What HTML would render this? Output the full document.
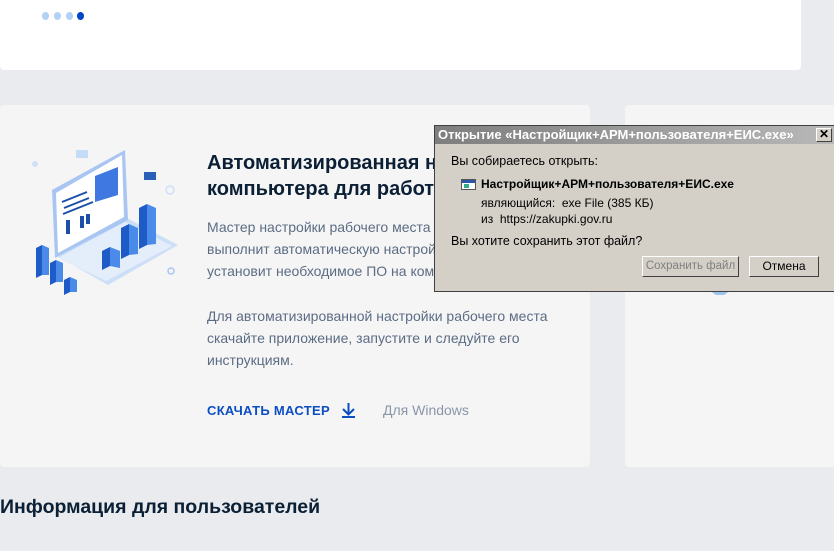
<!DOCTYPE html>
<html><head><meta charset="utf-8"><style>
*{margin:0;padding:0;box-sizing:border-box}
body{width:834px;height:551px;overflow:hidden;background:#e9ebee;font-family:"Liberation Sans","DejaVu Sans",sans-serif;position:relative}
.top{position:absolute;left:0;top:-10px;width:801px;height:80px;background:#fff;border-radius:0 0 4px 4px}
.dot{position:absolute;top:12px;width:7px;height:8px;border-radius:50%;background:#b3d0f5}
.card{position:absolute;top:105px;height:362px;background:#f5f5f6;border-radius:4px}
.h{position:absolute;left:207px;top:150px;font-size:20px;font-weight:bold;color:#0b1f35;line-height:26px;white-space:nowrap}
.p{position:absolute;left:207px;font-size:14px;color:#5c6c83;line-height:22px;white-space:nowrap}
.dl{position:absolute;left:434px;top:125px;width:400px;height:167px;background:#d4d0c8;border:1px solid #404040;border-right:none;font-family:"Liberation Sans",sans-serif;font-size:12.5px;color:#000}
.tb{height:18px;background:linear-gradient(90deg,#7e7e7e,#b8b8b8);color:#fff;font-weight:bold;font-size:13px;line-height:18px;padding-left:3px;position:relative;white-space:nowrap;overflow:hidden}
.x{position:absolute;right:2px;top:2px;width:16px;height:14px;background:#d4d0c8;border:1px solid;border-color:#fff #404040 #404040 #fff;color:#000;font-size:12px;line-height:11px;text-align:center}
.t{position:absolute;white-space:nowrap}
.btn{position:absolute;top:130px;height:21px;border:1px solid;border-color:#fff #404040 #404040 #fff;background:#d4d0c8;text-align:center;line-height:19px;font-size:12px;white-space:nowrap}
</style></head><body>
<div class="top">
<div class="dot" style="left:42px;top:22px"></div><div class="dot" style="left:54px;top:22px"></div><div class="dot" style="left:66px;top:22px"></div><div class="dot" style="left:77px;top:22px;background:#0047c8"></div>
</div>
<div class="card" style="left:0;width:590px"></div>
<div class="card" style="left:625px;width:220px"></div>
<svg style="position:absolute;left:0;top:120px" width="200" height="180" viewBox="0 0 200 180">
<polygon points="55,135 125,97 178,125 108,165" fill="#cddff7"/>
<polygon points="58,138 125,102 172,126 106,161" fill="#e4eefb"/>
<polygon points="52,70 125,30 128,100 55,138" fill="#a9c6f2"/>
<polygon points="56,73 122,35 124,97 58,133" fill="#fff"/>
<polygon points="95,56 118,47 118,75 95,82" fill="#3f78e0"/>
<path d="M62 82l25-10M64 88l25-10M63 94l30-12" stroke="#1c4fa8" stroke-width="2"/>
<rect x="66" y="100" width="4" height="14" fill="#1c4fa8"/><rect x="80" y="96" width="4" height="12" fill="#1c4fa8"/><rect x="86" y="94" width="4" height="10" fill="#1c4fa8"/>
<polygon points="102,131 110,127 110,146 102,150" fill="#1e5bc6"/><polygon points="110,127 120,131 120,148 110,146" fill="#4a8ae8"/>
<polygon points="121,108 129,104 129,135 121,139" fill="#1e5bc6"/><polygon points="129,104 138,108 138,134 129,135" fill="#4a8ae8"/>
<polygon points="139,88 147,84 147,125 139,129" fill="#1e5bc6"/><polygon points="147,84 156,88 156,124 147,125" fill="#4a8ae8"/>
<polygon points="36,128 42,125 42,155 36,158" fill="#1e5bc6"/><polygon points="42,125 49,128 49,155 42,155" fill="#4a8ae8"/>
<polygon points="50,143 56,140 56,162 50,165" fill="#1e5bc6"/><polygon points="56,140 63,143 63,162 56,162" fill="#4a8ae8"/>
<polygon points="64,160 70,157 70,172 64,175" fill="#1e5bc6"/><polygon points="70,157 77,160 77,172 70,172" fill="#4a8ae8"/>
<rect x="144" y="52" width="12" height="8" fill="#2a5fb8"/>
<rect x="76" y="30" width="12" height="8" fill="#c6dbf7"/>
<circle cx="170" cy="70" r="4" fill="none" stroke="#cfe0f7" stroke-width="1.5"/>
<circle cx="171" cy="151" r="3" fill="none" stroke="#a9c6f2" stroke-width="1.5"/>
<circle cx="35" cy="44" r="3" fill="#cfe0f7"/>
</svg>
<div class="h">Автоматизированная настройка рабочего<br>компьютера для работы в ЕИС</div>
<div class="p" style="top:216px">Мастер настройки рабочего места<br>выполнит автоматическую настройку и<br>установит необходимое ПО на компьютер</div>
<div class="p" style="top:305px">Для автоматизированной настройки рабочего места<br>скачайте приложение, запустите и следуйте его<br>инструкциям.</div>
<div class="t" style="left:207px;top:403px;font-size:13px;font-weight:bold;color:#0b4ec2;letter-spacing:.3px">СКАЧАТЬ МАСТЕР</div>
<svg style="position:absolute;left:341px;top:402px" width="15" height="16"><path d="M7.5 1v11M2 7l5.5 5.5L13 7M1 15h13" stroke="#0b4ec2" stroke-width="2" fill="none"/></svg>
<div class="t" style="left:383px;top:402px;font-size:14px;color:#8a96a8">Для Windows</div>
<div class="t" style="left:0;top:496px;font-size:19.5px;font-weight:bold;color:#0b1f35">Информация для пользователей</div>
<svg style="position:absolute;left:708px;top:291px" width="24" height="6"><path d="M2 0h20l-6 4h-8z" fill="#9fc2ea"/></svg>
<div class="dl">
<div class="tb">Открытие «Настройщик+АРМ+пользователя+ЕИС.exe»<div class="x">✕</div></div>
<div class="t" style="left:16px;top:28px">Вы собираетесь открыть:</div>
<div class="t" style="left:26px;top:53px;width:15px;height:11px;border:1px solid #555;background:#fff"><div style="height:3px;background:#2a56a8"></div><div style="margin:1px 2px;width:5px;height:4px;background:#3a8"></div></div>
<div class="t" style="left:46px;top:51px;font-weight:bold;font-size:12px">Настройщик+АРМ+пользователя+ЕИС.exe</div>
<div class="t" style="left:46px;top:70px;font-size:12px">являющийся: &nbsp;exe File (385 КБ)</div>
<div class="t" style="left:46px;top:86px;font-size:12px">из &nbsp;https://zakupki.gov.ru</div>
<div class="t" style="left:16px;top:108px">Вы хотите сохранить этот файл?</div>
<div class="btn" style="left:207px;width:97px;color:#808080;font-size:11.5px">Сохранить файл</div>
<div class="btn" style="left:314px;width:70px">Отмена</div>
</div>
</body></html>
